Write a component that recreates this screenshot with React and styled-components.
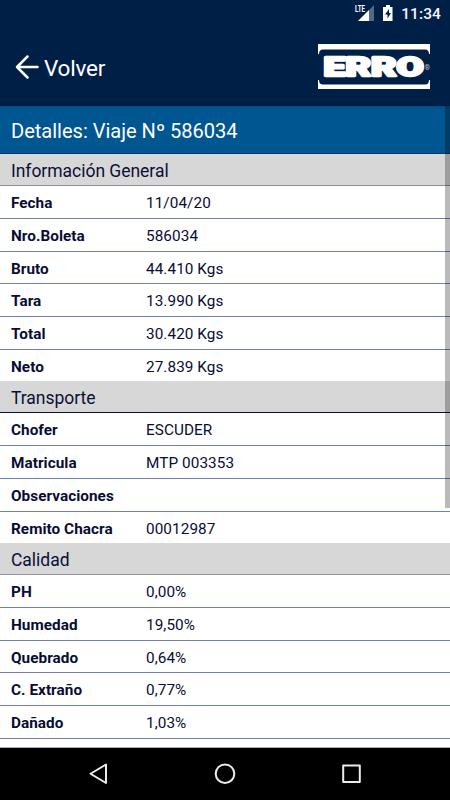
import React from 'react';
import styled, { createGlobalStyle } from 'styled-components';

const GlobalStyle = createGlobalStyle`
    body {
        margin: 0;
        background: #fff;
        font-family: Roboto, sans-serif;
    }
`;

const Screen = styled.div`
    display: flex;
    flex-direction: column;
    width: 450px;
    height: 800px;
    overflow: hidden;
    background: #fff;
`;

const StatusBar = styled.div`
    display: flex;
    flex: none;
    align-items: center;
    justify-content: flex-end;
    height: 28px;
    padding-right: 9px;
    background: #001f47;
`;

const Clock = styled.span`
    margin-left: 7px;
    font-size: 15.5px;
    font-weight: 500;
    line-height: 28px;
    letter-spacing: 0.1px;
    color: #f4f6fa;
`;

const Header = styled.header`
    display: flex;
    flex: none;
    align-items: center;
    justify-content: space-between;
    height: 78px;
    padding: 0 19px 0 15px;
    box-sizing: border-box;
    background: linear-gradient(#001f47 94%, #001b41);
`;

const BackButton = styled.button`
    display: flex;
    align-items: center;
    gap: 4px;
    padding: 0;
    border: none;
    background: none;
    font-family: inherit;
    font-size: 22.5px;
    line-height: 30px;
    letter-spacing: -0.2px;
    color: #fff;
`;

const BackText = styled.span`
    padding-top: 1px;
`;

const Content = styled.main`
    position: relative;
    flex: 1;
    min-height: 0;
    overflow: hidden;
    border-bottom: 1px solid #a9adb0;
`;

const Title = styled.h1`
    height: 48px;
    margin: 0;
    padding-left: 11px;
    box-sizing: border-box;
    border-bottom: 1px solid #00397c;
    font-size: 20.1px;
    font-weight: 400;
    line-height: 50px;
    letter-spacing: -0.03px;
    color: #fff;
    background: linear-gradient(#004a80, #005691 3px);
`;

const SectionTitle = styled.h2`
    height: 32px;
    margin: 0;
    padding-left: 11px;
    box-sizing: border-box;
    border-bottom: 1px solid ${props => props.line};
    font-size: 17.5px;
    font-weight: 400;
    line-height: 34px;
    letter-spacing: -0.03px;
    color: #0a1038;
    background: #d7d7d7;
`;

const Row = styled.div`
    display: grid;
    grid-template-columns: 135px 1fr;
    height: 32.8px;
    padding-left: 11px;
    box-sizing: border-box;
    border-bottom: 1px solid #7480b0;
    font-size: 15.3px;
    line-height: 34.6px;
    color: #080d33;

    ${props => props.last && `
        height: 31.3px;
        border-bottom: none;
    `}
`;

const Label = styled.span`
    font-weight: 700;
    letter-spacing: 0.05px;
`;

const Value = styled.span`
    letter-spacing: 0.08px;
`;

const ScrollThumb = styled.div`
    position: absolute;
    top: 0;
    right: 0;
    width: 5px;
    height: 402px;
    background: rgba(0, 0, 0, 0.27);
`;

const NavBar = styled.nav`
    display: flex;
    flex: none;
    height: 52px;
    background: #000;
`;

const LogoText = styled.text`
    font-family: Roboto, sans-serif;
    font-weight: 900;
    font-size: 25.5px;
    fill: #fff;
    stroke: #fff;
    stroke-width: 2.4px;
    stroke-linejoin: round;
`;

const sections = [
    {
        title: 'Información General',
        line: '#8d8e94',
        rows: [
            ['Fecha', '11/04/20'],
            ['Nro.Boleta', '586034'],
            ['Bruto', '44.410 Kgs'],
            ['Tara', '13.990 Kgs'],
            ['Total', '30.420 Kgs'],
            ['Neto', '27.839 Kgs'],
        ],
    },
    {
        title: 'Transporte',
        line: '#080d4a',
        rows: [
            ['Chofer', 'ESCUDER'],
            ['Matricula', 'MTP 003353'],
            ['Observaciones', ''],
            ['Remito Chacra', '00012987'],
        ],
    },
    {
        title: 'Calidad',
        line: '#93939f',
        open: true,
        rows: [
            ['PH', '0,00%'],
            ['Humedad', '19,50%'],
            ['Quebrado', '0,64%'],
            ['C. Extraño', '0,77%'],
            ['Dañado', '1,03%'],
        ],
    },
];

const StatusIcons = () => (
    <svg width="40" height="28" viewBox="355 0 40 28">
        <path d="M375 5v16h-16z" fill="#52698a" />
        <path d="M370 10v11h-11z" fill="#fff" />
        <path d="M355 4h12v9h-12z" fill="#001f47" />
        <text x="356" y="12" fill="#fff" fontSize="9" fontWeight="700"
            textLength="10" lengthAdjust="spacingAndGlyphs">LTE</text>
        <path d="M387 5h4v2h2.500v14h-9.500v-14h3z" fill="#fff" />
        <path d="M390 9l-4 5.500h2.500v4l3.500-5.500h-2z" fill="#001f47" />
    </svg>
);

const BackArrow = () => (
    <svg width="25" height="26" viewBox="0 0 25 26" fill="none"
        stroke="#fff" strokeWidth="2.500" strokeLinecap="round" strokeLinejoin="round">
        <path d="M12.500 2.500L2 13l10.500 10.500M2 13h20.500" />
    </svg>
);

const Logo = () => (
    <svg width="114" height="48" viewBox="317 43 114 48">
        <path d="M318 44h112v10h-1q0-4.500-4-4.500H323q-4 0-4 4.500h-1z" fill="#fff" />
        <path d="M318 89h112V80h-1q0 4.500-4 4.500H323q-4 0-4-4.500h-1z" fill="#fff" />
        <LogoText x="323.500" y="76" textLength="100" lengthAdjust="spacingAndGlyphs">ERRO</LogoText>
        <text x="424.500" y="69.500" fontSize="7" fill="#c3cad6">®</text>
    </svg>
);

const NavIcons = () => (
    <svg width="450" height="52" viewBox="0 748 450 52" fill="none"
        stroke="#ececec" strokeWidth="2" strokeLinejoin="round">
        <path d="M106 764.500v18.500l-15.500-9.250z" />
        <circle cx="225" cy="773.700" r="9.300" />
        <rect x="343.200" y="765.500" width="16.600" height="16.600" />
    </svg>
);

const Section = ({ title, line, rows, open }) => (
    <section>
        <SectionTitle line={line}>{title}</SectionTitle>
        {rows.map(([label, value], i) => (
            <Row key={label} last={!open && i === rows.length - 1 ? 1 : undefined}>
                <Label>{label}</Label>
                <Value>{value}</Value>
            </Row>
        ))}
    </section>
);

const App = () => (
    <Screen>
        <GlobalStyle />
        <StatusBar>
            <StatusIcons />
            <Clock>11:34</Clock>
        </StatusBar>
        <Header>
            <BackButton>
                <BackArrow />
                <BackText>Volver</BackText>
            </BackButton>
            <Logo />
        </Header>
        <Content>
            <Title>Detalles: Viaje Nº 586034</Title>
            {sections.map(section => <Section key={section.title} {...section} />)}
            <ScrollThumb />
        </Content>
        <NavBar>
            <NavIcons />
        </NavBar>
    </Screen>
);

export default App;
